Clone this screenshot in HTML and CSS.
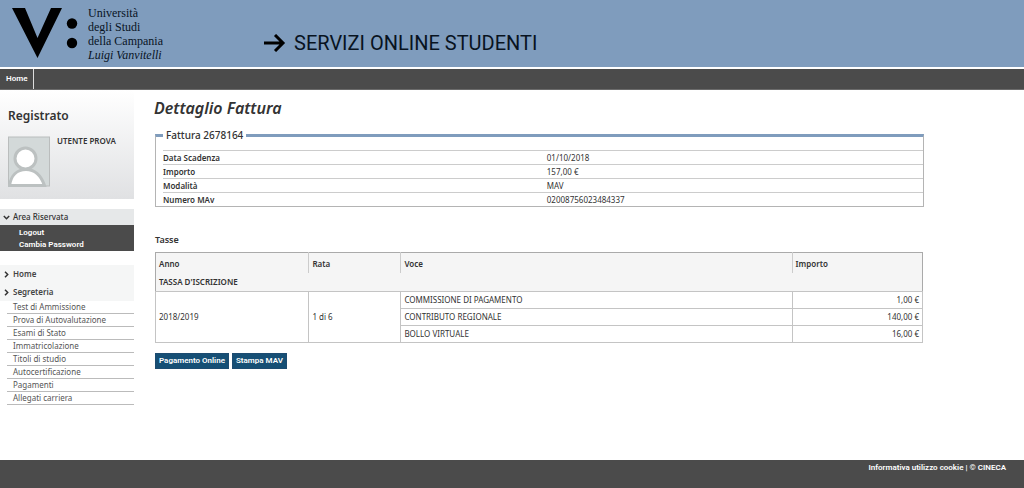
FILE: index.html
```html
<!DOCTYPE html>
<html lang="it">
<head>
<meta charset="utf-8">
<meta name="viewport" content="width=device-width, initial-scale=1">
<title>Dettaglio Fattura</title>
<link rel="stylesheet" href="styles.css">
</head>
<body>
<header class="banner">
  <svg class="brand-mark" viewBox="0 0 68 52" aria-hidden="true"><path d="M0 0H13L25.500 30L39 0H50L25.500 50Z"/><circle cx="60" cy="15.500" r="5.200"/><circle cx="60" cy="35" r="5.200"/></svg>
  <p class="brand-name">Università<br>degli Studi<br>della Campania<br><em>Luigi Vanvitelli</em></p>
  <div class="service">
    <svg class="service-arrow" viewBox="0 0 22 18" aria-hidden="true"><path d="M0 9H19M11 1L19 9L11 17"/></svg>
    <span>SERVIZI ONLINE STUDENTI</span>
  </div>
</header>
<nav class="topnav"><a href="#">Home</a></nav>
<div class="layout">
  <aside class="sidebar">
    <section class="user">
      <h2>Registrato</h2>
      <div class="user-row">
        <svg class="avatar" viewBox="0 0 42 50" aria-hidden="true"><rect class="avatar-bg" x=".5" y=".5" width="41" height="49"/><path class="avatar-body" d="M1.500 49C3 39 9 33 18 33S33 39 36.500 49Z"/><circle class="avatar-head" cx="17.500" cy="22" r="10.500"/></svg>
        <span>UTENTE PROVA</span>
      </div>
    </section>
    <section class="account">
      <h3><svg class="chevron" viewBox="0 0 7 7" aria-hidden="true"><path d="M.8 2L3.500 4.700L6.200 2"/></svg>Area Riservata</h3>
      <ul>
        <li><a href="#">Logout</a></li>
        <li><a href="#">Cambia Password</a></li>
      </ul>
    </section>
    <nav class="menu">
      <a class="menu-head" href="#"><svg class="chevron" viewBox="0 0 7 7" aria-hidden="true"><path d="M2 .8L4.700 3.500L2 6.200"/></svg>Home</a>
      <a class="menu-head" href="#"><svg class="chevron" viewBox="0 0 7 7" aria-hidden="true"><path d="M2 .8L4.700 3.500L2 6.200"/></svg>Segreteria</a>
      <ul>
        <li><a href="#">Test di Ammissione</a></li>
        <li><a href="#">Prova di Autovalutazione</a></li>
        <li><a href="#">Esami di Stato</a></li>
        <li><a href="#">Immatricolazione</a></li>
        <li><a href="#">Titoli di studio</a></li>
        <li><a href="#">Autocertificazione</a></li>
        <li><a href="#">Pagamenti</a></li>
        <li><a href="#">Allegati carriera</a></li>
      </ul>
    </nav>
  </aside>
  <main class="content">
    <h1>Dettaglio Fattura</h1>
    <fieldset class="invoice">
      <legend>Fattura 2678164</legend>
      <table class="details">
        <tr><th scope="row">Data Scadenza</th><td>01/10/2018</td></tr>
        <tr><th scope="row">Importo</th><td>157,00 €</td></tr>
        <tr><th scope="row">Modalità</th><td>MAV</td></tr>
        <tr><th scope="row">Numero MAv</th><td>02008756023484337</td></tr>
      </table>
    </fieldset>
    <h2 id="fees-title">Tasse</h2>
    <table class="fees" aria-labelledby="fees-title">
      <colgroup><col class="col-year"><col class="col-rate"><col class="col-item"><col class="col-amount"></colgroup>
      <thead>
        <tr class="labels"><th scope="col">Anno</th><th scope="col">Rata</th><th scope="col">Voce</th><th scope="col">Importo</th></tr>
        <tr class="group"><th colspan="4">TASSA D'ISCRIZIONE</th></tr>
      </thead>
      <tbody>
        <tr><td rowspan="3">2018/2019</td><td rowspan="3">1 di 6</td><td>COMMISSIONE DI PAGAMENTO</td><td class="amount">1,00 €</td></tr>
        <tr><td>CONTRIBUTO REGIONALE</td><td class="amount">140,00 €</td></tr>
        <tr><td>BOLLO VIRTUALE</td><td class="amount">16,00 €</td></tr>
      </tbody>
    </table>
    <div class="actions">
      <button type="button">Pagamento Online</button>
      <button type="button">Stampa MAV</button>
    </div>
  </main>
</div>
<footer class="footer"><a href="#">Informativa utilizzo cookie</a> | © CINECA</footer>
</body>
</html>
```

FILE: styles.css
```css
* { box-sizing: border-box; }
body {
  margin: 0;
  min-height: 100vh;
  display: flex;
  flex-direction: column;
  background: #fff;
  color: #333;
  font: 8px/12px "Trebuchet MS", "Noto Sans", sans-serif;
}
a { color: inherit; text-decoration: none; }
ul { list-style: none; margin: 0; padding: 0; }
h1, h2, h3, p { margin: 0; }

.banner {
  display: flex;
  align-items: flex-start;
  padding: 6px 12px 5px;
  background: #7f9cbd;
  border-bottom: 1px solid #fff;
  color: #08131f;
}
.brand-mark { width: 68px; height: 52px; margin-top: 2px; flex: none; fill: #000; }
.brand-name {
  margin-left: 8px;
  width: 176px;
  font: 12px/14px "Liberation Serif", serif;
}
.service { display: flex; align-items: center; gap: 8px; padding-top: 25px; font: 20px/24px Roboto, sans-serif; }
.service-arrow { width: 22px; height: 18px; fill: none; stroke: #000; stroke-width: 3; }

.topnav {
  display: flex;
  margin-top: 1px;
  background: #4b4b4b;
  border-bottom: 1px solid #6b6b6b;
  color: #fff;
}
.topnav a { padding: 4px 6px; border-right: 1px solid #ddd; }

.layout { flex: 1; display: flex; gap: 20px; }
.sidebar { width: 134px; flex: none; }
.user {
  height: 109px;
  padding: 18px 8px 0;
  background: linear-gradient(#fff, #e0e1e3);
}
.user h2 { font-size: 12px; line-height: 16px; font-weight: 600; }
.user-row { display: flex; gap: 7px; margin-top: 12px; line-height: 10px; font-weight: 600; }
.avatar { width: 42px; height: 51px; }
.avatar-bg { fill: #d3d9d9; stroke: #babdbd; }
.avatar-head, .avatar-body { fill: #fff; stroke: #bcc1c1; stroke-width: 3; }

.chevron { width: 7px; height: 7px; margin-right: 3px; fill: none; stroke: #333; stroke-width: 1.5; flex: none; }
.account { margin-top: 10px; }
.account h3 {
  display: flex;
  align-items: center;
  padding: 2px 3px;
  background: #e6e8e9;
  font-size: 8px;
  font-weight: 500;
}
.account ul { padding: 2px 19px 0; background: #4b4b4b; color: #fff; }
.menu { margin-top: 14px; color: #555; }
.menu-head {
  display: flex;
  align-items: center;
  padding: 3px;
  background: #f5f6f6;
  color: #444;
  font-weight: 600;
}
.menu ul { padding-left: 7px; }
.menu li { border-bottom: 1px solid #bbb; padding-left: 6px; }

.content { flex: 1; min-width: 0; padding: 8px 100px 20px 0; }
h1 { font-size: 16px; line-height: 20px; font-style: italic; font-weight: 600; }
.invoice {
  margin: 10px 0 0 1px;
  padding: 8px 0 0 7px;
  border: 1px solid #b4b4b4;
  border-top: 3px solid #7f9cbd;
}
.invoice legend { padding: 0 3px; font-size: 10px; line-height: 14px; font-weight: 500; }
table { width: 100%; border-collapse: collapse; table-layout: fixed; }
th, td { text-align: left; }
th { font-weight: 600; }
.details th { width: 50.5%; }
.details th, .details td { padding: 1px 0 0; border-top: 1px solid #ccc; }
.content h2 { margin: 26px 0 5px 1px; font-size: 9px; line-height: 14px; font-weight: 600; }
.fees { width: calc(100% - 2px); margin-left: 1px; border: 1px solid #aaa; }
.col-year { width: 20%; }
.col-rate { width: 12%; }
.col-item { width: 51%; }
.col-amount { width: 17%; }
.fees th, .fees td { padding: 2px 3px; }
.fees thead { background: #f5f5f5; }
.labels th { height: 20px; padding-top: 4px; }
.labels th:not(:last-child) { border-right: 1px solid #ccc; }
.group th { height: 19px; }
.fees tbody td { height: 16px; border: 1px solid #c4c4c4; }
.fees .amount { text-align: right; }
.actions { display: flex; gap: 3px; margin: 10px 0 0 1px; }
button {
  padding: 2px 3px;
  border: 1px solid #1d4b70;
  background: #164f75;
  color: #fff;
  font-size: 8px;
  line-height: 10px;
}

.footer {
  padding: 2px 18px 14px;
  background: #4b4b4b;
  color: #fff;
  text-align: right;
}

.topnav, .account ul, button, .footer {
  font-family: "Trebuchet MS", Roboto, sans-serif;
  font-weight: 600;
}
```
